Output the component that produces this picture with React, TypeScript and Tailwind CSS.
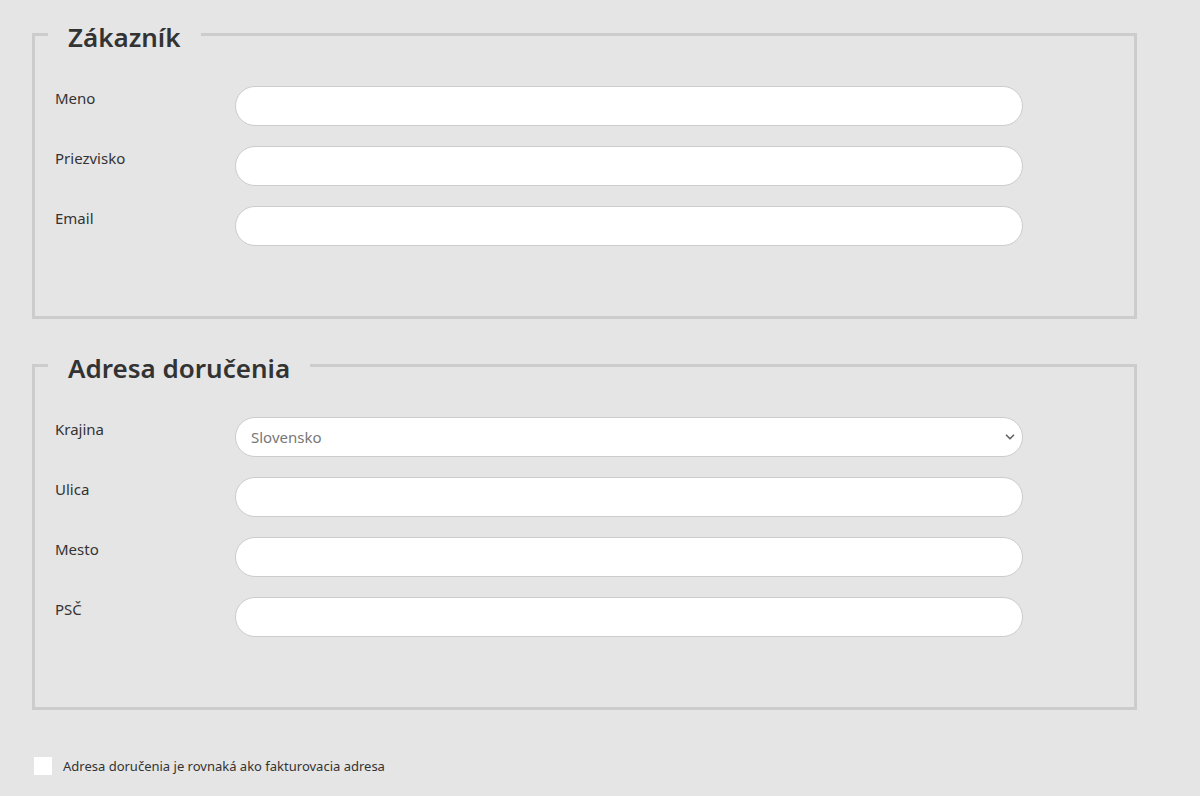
import { ChevronDown } from "lucide-react";

const customerFields = ["Meno", "Priezvisko", "Email"];
const addressFields = ["Ulica", "Mesto", "PSČ"];

const font = { fontFamily: '"Noto Sans", "Open Sans", sans-serif' };

const Row = ({ label, children }: { label: string; children: React.ReactNode }) => (
  <div className="flex items-start">
    <label className="w-[180px] shrink-0 text-[15px] leading-6 text-[#333]">{label}</label>
    {children}
  </div>
);

const TextInput = () => (
  <input type="text" className="h-10 w-[788px] rounded-full border border-[#ccc] bg-white px-4 text-[15px] text-[#333] outline-none" />
);

const Section = ({ title, children, className = "" }: { title: string; children: React.ReactNode; className?: string }) => (
  <fieldset className={`w-[1105px] border-[3px] border-[#ccc] px-5 pt-[34px] pb-[70px] ${className}`}>
    <legend className="-ml-[7px] px-5 pt-[6px] text-[26px] font-semibold leading-[29px] text-[#333]">{title}</legend>
    <div className="flex flex-col gap-5">{children}</div>
  </fieldset>
);

export default function App() {
  return (
    <div className="min-h-screen bg-[#e5e5e5] pl-8 pt-[17px]" style={font}>
      <Section title="Zákazník">
        {customerFields.map((f) => (
          <Row key={f} label={f}>
            <TextInput />
          </Row>
        ))}
      </Section>

      <Section title="Adresa doručenia" className="mt-[29px]">
        <Row label="Krajina">
          <div className="relative">
            <select defaultValue="SK" className="h-10 w-[788px] appearance-none rounded-full border border-[#ccc] bg-white pl-[15px] text-[15px] text-[#777] outline-none">
              <option value="SK">Slovensko</option>
              <option value="CZ">Česko</option>
            </select>
            <ChevronDown className="pointer-events-none absolute right-[6px] top-[13px] h-[14px] w-[14px] text-[#666]" strokeWidth={3} />
          </div>
        </Row>
        {addressFields.map((f) => (
          <Row key={f} label={f}>
            <TextInput />
          </Row>
        ))}
      </Section>

      <label className="ml-[2px] mt-[46px] flex items-center gap-[11px] text-[13px] leading-5 text-[#333]">
        <input type="checkbox" className="h-[18px] w-[18px] appearance-none bg-white" />
        Adresa doručenia je rovnaká ako fakturovacia adresa
      </label>
    </div>
  );
}
